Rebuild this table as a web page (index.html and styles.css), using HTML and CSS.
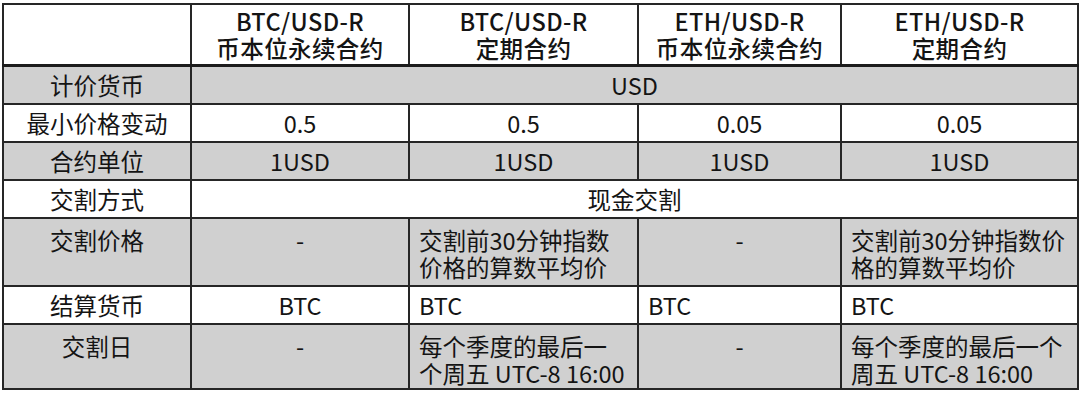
FILE: index.html
```html
<!DOCTYPE html>
<html lang="zh-CN">
<head>
<meta charset="utf-8">
<link rel="stylesheet" href="styles.css">
</head>
<body>
<div class="wrap">
<table class="spec">
  <colgroup>
    <col class="c1"><col class="c2"><col class="c3"><col class="c4"><col class="c5">
  </colgroup>
  <thead>
    <tr class="head">
      <th></th>
      <th>BTC/USD-R<br>币本位永续合约</th>
      <th>BTC/USD-R<br>定期合约</th>
      <th>ETH/USD-R<br>币本位永续合约</th>
      <th>ETH/USD-R<br>定期合约</th>
    </tr>
  </thead>
  <tbody>
    <tr class="grey">
      <td class="label">计价货币</td>
      <td colspan="4" class="mid">USD</td>
    </tr>
    <tr>
      <td class="label">最小价格变动</td>
      <td class="mid">0.5</td><td class="mid">0.5</td><td class="mid">0.05</td><td class="mid">0.05</td>
    </tr>
    <tr class="grey">
      <td class="label">合约单位</td>
      <td class="mid">1USD</td><td class="mid">1USD</td><td class="mid">1USD</td><td class="mid">1USD</td>
    </tr>
    <tr>
      <td class="label">交割方式</td>
      <td colspan="4" class="mid">现金交割</td>
    </tr>
    <tr class="grey tall">
      <td class="label">交割价格</td>
      <td class="mid">-</td>
      <td>交割前30分钟指数<br>价格的算数平均价</td>
      <td class="mid">-</td>
      <td>交割前30分钟指数价<br>格的算数平均价</td>
    </tr>
    <tr>
      <td class="label">结算货币</td>
      <td class="mid">BTC</td><td>BTC</td><td>BTC</td><td>BTC</td>
    </tr>
    <tr class="grey tall last">
      <td class="label">交割日</td>
      <td class="mid">-</td>
      <td>每个季度的最后一<br>个周五 UTC-8 16:00</td>
      <td class="mid">-</td>
      <td>每个季度的最后一个<br>周五 UTC-8 16:00</td>
    </tr>
  </tbody>
</table>
</div>
</body>
</html>
```

FILE: styles.css
```css
html, body {
  margin: 0;
  padding: 0;
  background: #ffffff;
}
.wrap {
  padding: 3px 0 0 2px;
}
.spec {
  border-collapse: collapse;
  table-layout: fixed;
  width: 1075px;
  font-family: "Noto Sans CJK SC", "Noto Sans", sans-serif;
  font-size: 23.5px;
  color: #141414;
}
.c1 { width: 188px; }
.c2 { width: 218px; }
.c3 { width: 229px; }
.c4 { width: 203px; }
.c5 { width: 237px; }
.spec th, .spec td {
  border: 2px solid #262626;
  padding: 0 4px 0 9px;
  line-height: 27px;
  vertical-align: middle;
  text-align: left;
  white-space: nowrap;
}
.spec th {
  font-weight: 500;
  font-size: 23.5px;
  text-align: center;
  height: 59px;
  padding: 0;
  border-bottom: 3px solid #1c1c1c;
  letter-spacing: 0.4px;
}
.spec td {
  height: 36px;
}
.spec td.label, .spec td.mid {
  text-align: center;
  padding: 0;
}
.spec .tall td.label, .spec .tall td.mid {
  padding-top: 8px;
}
.grey td {
  background: #d0d0d0;
}
.tall td {
  height: 58px;
  vertical-align: top;
  padding-top: 8px;
  padding-bottom: 0;
}
.last td {
  height: 55px;
}
```
